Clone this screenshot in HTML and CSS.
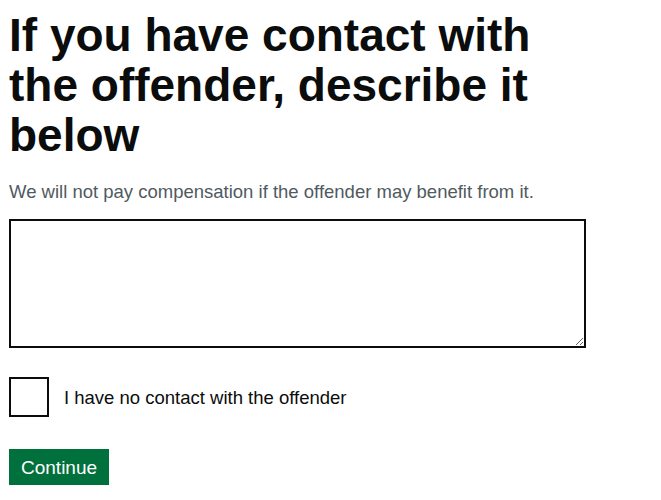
FILE: index.html
```html
<!DOCTYPE html>
<html lang="en">
<head>
<meta charset="utf-8">
<title>Contact with offender</title>
<link rel="stylesheet" href="styles.css">
</head>
<body>
<main class="page">
  <form class="form">
    <div class="group">
      <h1 class="label-wrapper">
        <label class="label-xl" for="contact">If you have contact with<br>the offender, describe it<br>below</label>
      </h1>
      <div class="hint">We will not pay compensation if the offender may benefit from it.</div>
      <textarea class="textarea" id="contact" rows="5"></textarea>
    </div>
    <div class="group checkbox-group">
      <div class="checkbox-item">
        <input class="checkbox-input" type="checkbox" id="no-contact">
        <label class="checkbox-label" for="no-contact">I have no contact with the offender</label>
      </div>
    </div>
    <button class="button" type="submit">Continue</button>
  </form>
</main>
</body>
</html>
```
FILE: styles.css
```css
html, body {
  margin: 0;
  padding: 0;
  background: #ffffff;
}
body {
  font-family: "Liberation Sans", Arial, sans-serif;
  color: #0b0c0c;
}
.page {
  padding: 10px 9px 0 9px;
}
.form {
  width: 577px;
}
.label-wrapper {
  margin: 0;
  font-size: inherit;
  font-weight: inherit;
}
.label-xl {
  display: block;
  font-size: 46px;
  line-height: 50px;
  font-weight: 700;
  margin-bottom: 19px;
}
.hint {
  font-size: 18.5px;
  line-height: 25px;
  color: #505a5f;
  margin-bottom: 15px;
}
.textarea {
  display: block;
  box-sizing: border-box;
  width: 577px;
  height: 129px;
  border: 2px solid #0b0c0c;
  border-radius: 0;
  padding: 5px;
  margin: 0;
  font-family: inherit;
  font-size: 19px;
  resize: vertical;
}
.checkbox-group {
  margin-top: 29px;
}
.checkbox-item {
  display: flex;
  align-items: center;
  gap: 15px;
}
.checkbox-input {
  appearance: none;
  -webkit-appearance: none;
  margin: 0;
  width: 40px;
  height: 40px;
  box-sizing: border-box;
  border: 2px solid #0b0c0c;
  background: #fff;
}
.checkbox-label {
  font-size: 18.5px;
  line-height: 25px;
  color: #0b0c0c;
}
.button {
  margin-top: 32px;
  display: inline-block;
  background: #00703c;
  color: #ffffff;
  border: 2px solid transparent;
  border-radius: 0;
  box-shadow: 0 2px 0 #002d18;
  font-family: inherit;
  font-size: 19px;
  line-height: 20px;
  padding: 7px 10px 5px;
  cursor: pointer;
}
```
